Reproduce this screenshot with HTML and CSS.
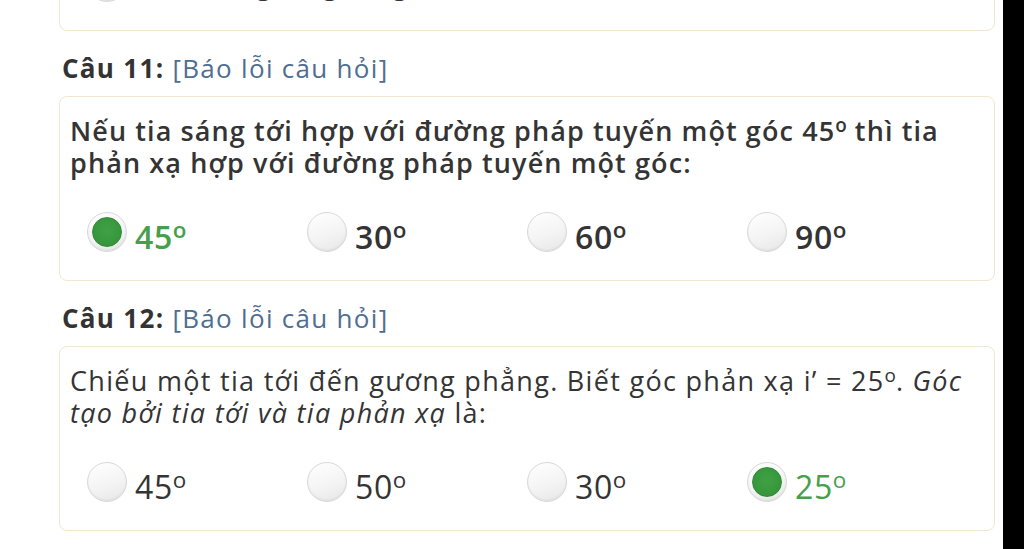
FILE: index.html
```html
<!DOCTYPE html>
<html lang="vi">
<head>
<meta charset="utf-8">
<title>Câu hỏi</title>
<link rel="stylesheet" href="styles.css">
</head>
<body>
<main class="page">
  <section class="card card-prev">
    <div class="options strong">
      <label class="option"><span class="radio"></span><span class="label">Luôn bằng tổng hai góc</span></label>
    </div>
  </section>

  <h2 class="q-title"><span class="q-num">Câu 11:</span> <a class="report">[Báo lỗi câu hỏi]</a></h2>
  <section class="card">
    <p class="q-text strong">Nếu tia sáng tới hợp với đường pháp tuyến một góc 45<sup>o</sup> thì tia phản xạ hợp với đường pháp tuyến một góc:</p>
    <div class="options strong">
      <label class="option correct"><span class="radio checked"></span><span class="label">45<sup>o</sup></span></label>
      <label class="option"><span class="radio"></span><span class="label">30<sup>o</sup></span></label>
      <label class="option"><span class="radio"></span><span class="label">60<sup>o</sup></span></label>
      <label class="option"><span class="radio"></span><span class="label">90<sup>o</sup></span></label>
    </div>
  </section>

  <h2 class="q-title"><span class="q-num">Câu 12:</span> <a class="report">[Báo lỗi câu hỏi]</a></h2>
  <section class="card">
    <p class="q-text">Chiếu một tia tới đến gương phẳng. Biết góc phản xạ i’ = 25<sup>o</sup>. <em>Góc tạo bởi tia tới và tia phản xạ</em> là:</p>
    <div class="options">
      <label class="option"><span class="radio"></span><span class="label">45<sup>o</sup></span></label>
      <label class="option"><span class="radio"></span><span class="label">50<sup>o</sup></span></label>
      <label class="option"><span class="radio"></span><span class="label">30<sup>o</sup></span></label>
      <label class="option correct"><span class="radio checked"></span><span class="label">25<sup>o</sup></span></label>
    </div>
  </section>
</main>
<aside class="edge"></aside>
</body>
</html>
```

FILE: styles.css
```css
html, body {
  margin: 0;
  padding: 0;
}
body {
  display: flex;
  width: 1024px;
  height: 549px;
  overflow: hidden;
  background: #000;
  font-family: "Open Sans", "Noto Sans", sans-serif;
  color: #343434;
}
.page {
  width: 1003px;
  flex: none;
  background: #fff;
  padding: 0 8px 0 59px;
  box-sizing: border-box;
  overflow: hidden;
}
.edge {
  flex: 1;
  background: #000;
}
.card {
  border: 1px solid #f1e7cf;
  border-radius: 8px;
  padding: 18px 10px 28px 10px;
  background: #fff;
}
.card-prev {
  margin-top: -140px;
  padding-top: 68px;
}
.q-title {
  margin: 21px 0 12px 3px;
  font-size: 26px;
  line-height: 32px;
  font-weight: 400;
  letter-spacing: 1.3px;
}
.q-num {
  font-weight: 700;
  color: #333;
}
.report {
  color: #4f6e91;
}
.q-text {
  margin: 0;
  font-size: 27px;
  line-height: 32px;
  font-weight: 400;
  letter-spacing: 1.3px;
}
.q-text.strong {
  letter-spacing: 1.1px;
}
.strong {
  font-weight: 600;
}
sup {
  font-size: 0.7em;
  line-height: 0;
  vertical-align: 0.5em;
  letter-spacing: 0;
}
.options {
  display: flex;
  margin: 33px 0 0 17px;
  height: 40px;
}
.option {
  width: 220px;
  display: flex;
  align-items: center;
  gap: 8px;
  font-size: 32px;
  letter-spacing: 0.6px;
}
.option .label {
  padding-top: 9px;
}
.card-prev .option {
  width: auto;
  font-size: 26px;
  letter-spacing: 0.5px;
}
.card-prev .option .label {
  padding-top: 6px;
}
.radio {
  width: 38px;
  height: 38px;
  border-radius: 50%;
  border: 1px solid #d9d9d9;
  background: linear-gradient(160deg, #ffffff 0%, #f4f4f4 55%, #e6e6e6 100%);
  box-shadow: inset 0 -1px 2px rgba(0,0,0,0.06);
  position: relative;
  flex: none;
}
.radio.checked::after {
  content: "";
  position: absolute;
  left: 4px;
  top: 4px;
  width: 28px;
  height: 28px;
  border-radius: 50%;
  background: radial-gradient(circle at 50% 45%, #3fa144 0%, #37963c 70%, #2e8a33 100%);
  border: 1px solid #2f8a34;
}
.correct .label {
  color: #45a04a;
}
```
